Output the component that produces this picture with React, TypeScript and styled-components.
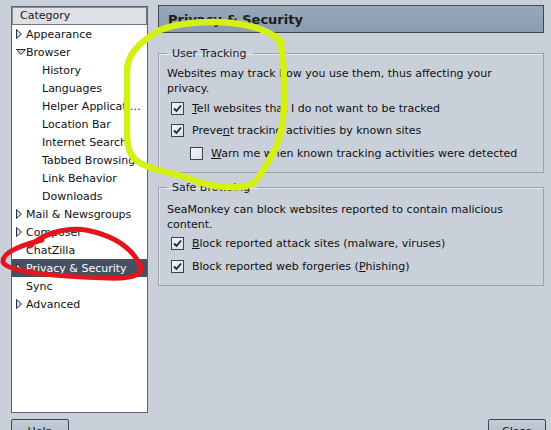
import React from "react";
import styled, { createGlobalStyle } from "styled-components";

const Global = createGlobalStyle`
  html, body {
    margin: 0;
    padding: 0;
    background: #c9d0d9;
  }
  body {
    font-family: "DejaVu Sans", "Liberation Sans", sans-serif;
    font-size: 11px;
    color: #101010;
  }
`;

const Window = styled.div`
  position: relative;
  width: 551px;
  height: 430px;
  overflow: hidden;
  box-sizing: border-box;
  padding: 5px 5px 0 11px;
  display: flex;
  flex-direction: column;
`;

const Main = styled.div`
  display: flex;
  gap: 10px;
  height: 408px;
  flex: none;
`;

const Tree = styled.div`
  margin-top: 1px;
  width: 137px;
  box-sizing: border-box;
  border: 1px solid #5c6470;
  background: #ffffff;
  display: flex;
  flex-direction: column;
`;

const TreeHead = styled.div`
  height: 18px;
  box-sizing: border-box;
  padding-left: 7px;
  line-height: 16px;
  background: #dde0e4;
  border: 1px solid #8b9199;
  border-right-color: #6f757d;
  border-bottom-color: #6f757d;
  color: #1a1a1a;
`;

const Row = styled.div<{ $depth: number; $selected?: boolean }>`
  height: 18px;
  display: flex;
  align-items: center;
  box-sizing: border-box;
  padding-left: ${(p) => (p.$depth ? 30 : 4)}px;
  background: ${(p) => (p.$selected ? "#475062" : "transparent")};
  color: ${(p) => (p.$selected ? "#ffffff" : "#111111")};
  white-space: nowrap;
  overflow: hidden;
`;

const TwistySlot = styled.span`
  width: 10px;
  flex: none;
  display: flex;
  align-items: center;
  justify-content: flex-start;
`;

const Label = styled.span`
  overflow: hidden;
  text-overflow: ellipsis;
  padding-right: 2px;
`;

const Pane = styled.div`
  width: 386px;
  display: flex;
  flex-direction: column;
`;

const Title = styled.div`
  height: 28px;
  flex: none;
  box-sizing: border-box;
  border: 1px solid #3f4752;
  background: linear-gradient(#98a8b9, #8b9cae);
  padding-left: 9px;
  display: flex;
  align-items: center;
  font-size: 13px;
  font-weight: bold;
  color: #1b1d20;
`;

const Group = styled.fieldset<{ $top: number; $padTop: number }>`
  margin: ${(p) => p.$top}px 0 0 0;
  padding: ${(p) => p.$padTop}px 8px 7px 8px;
  border: 1px solid #9aa2ac;
  box-shadow: inset 1px 1px 0 #e4e8ec;
  min-width: 0;
`;

const Legend = styled.legend`
  margin-left: 0;
  padding: 0 7px 0 5px;
  color: #1a1a1a;
`;

const Desc = styled.div`
  line-height: 15px;
  margin-bottom: 1px;
`;

const CheckRow = styled.label<{ $indent?: boolean }>`
  display: flex;
  align-items: center;
  height: 22.5px;
  padding-left: ${(p) => (p.$indent ? 23 : 4)}px;
  gap: 8px;
`;

const Box = styled.span`
  width: 13px;
  height: 13px;
  flex: none;
  box-sizing: border-box;
  border: 1px solid #3b434e;
  background: linear-gradient(135deg, #f4f6f8, #d9dfe6);
  display: flex;
  align-items: center;
  justify-content: center;
`;

const Key = styled.span`
  text-decoration: underline;
`;

const Buttons = styled.div`
  display: flex;
  justify-content: space-between;
  margin-top: 6px;
  flex: none;
`;

const Button = styled.button`
  width: 58px;
  height: 24px;
  box-sizing: border-box;
  border: 1px solid #3b434e;
  border-radius: 2px;
  background: linear-gradient(#c4cdd8, #aeb9c6);
  font-family: "DejaVu Sans", "Liberation Sans", sans-serif;
  font-size: 11px;
  color: #111;
  padding: 0;
`;

const Marks = styled.svg`
  position: absolute;
  left: 0;
  top: 0;
  pointer-events: none;
`;

function Twisty({ open }: { open?: boolean }) {
  if (open) {
    return (
      <svg width="10" height="6" viewBox="0 0 10 6">
        <polygon points="0.5,0.5 9.5,0.5 5,5.5" fill="#cdd8ea" stroke="#27303c" strokeWidth="1" />
      </svg>
    );
  }
  return (
    <svg width="6" height="10" viewBox="0 0 6 10">
      <polygon points="0.5,0.5 5.5,5 0.5,9.5" fill="#cdd8ea" stroke="#27303c" strokeWidth="1" />
    </svg>
  );
}

function Check({ on, children, indent }: { on?: boolean; children: React.ReactNode; indent?: boolean }) {
  return (
    <CheckRow $indent={indent}>
      <Box>
        {on && (
          <svg width="9" height="9" viewBox="0 0 9 9">
            <path d="M1 4.5 L3.5 7 L8 1.5" fill="none" stroke="#1e2630" strokeWidth="1.8" />
          </svg>
        )}
      </Box>
      <span>{children}</span>
    </CheckRow>
  );
}

type Item = { label: string; depth: number; twisty?: "open" | "closed"; selected?: boolean };

const items: Item[] = [
  { label: "Appearance", depth: 0, twisty: "closed" },
  { label: "Browser", depth: 0, twisty: "open" },
  { label: "History", depth: 1 },
  { label: "Languages", depth: 1 },
  { label: "Helper Applications", depth: 1 },
  { label: "Location Bar", depth: 1 },
  { label: "Internet Search", depth: 1 },
  { label: "Tabbed Browsing", depth: 1 },
  { label: "Link Behavior", depth: 1 },
  { label: "Downloads", depth: 1 },
  { label: "Mail & Newsgroups", depth: 0, twisty: "closed" },
  { label: "Composer", depth: 0, twisty: "closed" },
  { label: "ChatZilla", depth: 0 },
  { label: "Privacy & Security", depth: 0, twisty: "closed", selected: true },
  { label: "Sync", depth: 0 },
  { label: "Advanced", depth: 0, twisty: "closed" },
];

export default function App() {
  return (
    <>
      <Global />
      <Window>
        <Main>
          <Tree>
            <TreeHead>Category</TreeHead>
            {items.map((it) => (
              <Row key={it.label} $depth={it.depth} $selected={it.selected}>
                {it.depth === 0 && <TwistySlot>{it.twisty && <Twisty open={it.twisty === "open"} />}</TwistySlot>}
                <Label>{it.label}</Label>
              </Row>
            ))}
          </Tree>
          <Pane>
            <Title>Privacy &amp; Security</Title>
            <Group $top={14} $padTop={6}>
              <Legend>User Tracking</Legend>
              <Desc>Websites may track how you use them, thus affecting your privacy.</Desc>
              <Check on>
                <Key>T</Key>ell websites that I do not want to be tracked
              </Check>
              <Check on>
                Preve<Key>n</Key>t tracking activities by known sites
              </Check>
              <Check indent>
                <Key>W</Key>arn me when known tracking activities were detected
              </Check>
            </Group>
            <Group $top={8} $padTop={8}>
              <Legend>Safe Browsing</Legend>
              <Desc>SeaMonkey can block websites reported to contain malicious content.</Desc>
              <Check on>
                <Key>B</Key>lock reported attack sites (malware, viruses)
              </Check>
              <Check on>
                Block reported web forgeries (<Key>P</Key>hishing)
              </Check>
            </Group>
          </Pane>
        </Main>
        <Buttons>
          <Button>Help</Button>
          <Button>Close</Button>
        </Buttons>
        <Marks width="551" height="430" viewBox="0 0 551 430">
          <path
            d="M276 38 C284 44, 284 70, 284 100 C284 125, 280 145, 268 162 C262 172, 258 180, 252 184 C238 190, 210 188, 185 177 C168 172, 152 170, 140 163 C130 157, 127 148, 127 132 L127 72 C127 56, 136 44, 160 30 C180 22, 215 20, 240 24 C258 27, 272 32, 282 42"
            fill="none"
            stroke="#d4f016"
            strokeWidth="6.5"
            strokeLinecap="round"
            strokeLinejoin="round"
          />
          <path
            d="M42 240 C22 245, 2 252, 3 262 C6 272, 60 277, 108 278 C134 279, 146 274, 139 263 C131 248, 116 236, 86 230 C62 227, 42 235, 30 246"
            fill="none"
            stroke="#e3161e"
            strokeWidth="5"
            strokeLinecap="round"
            strokeLinejoin="round"
          />
        </Marks>
      </Window>
    </>
  );
}
